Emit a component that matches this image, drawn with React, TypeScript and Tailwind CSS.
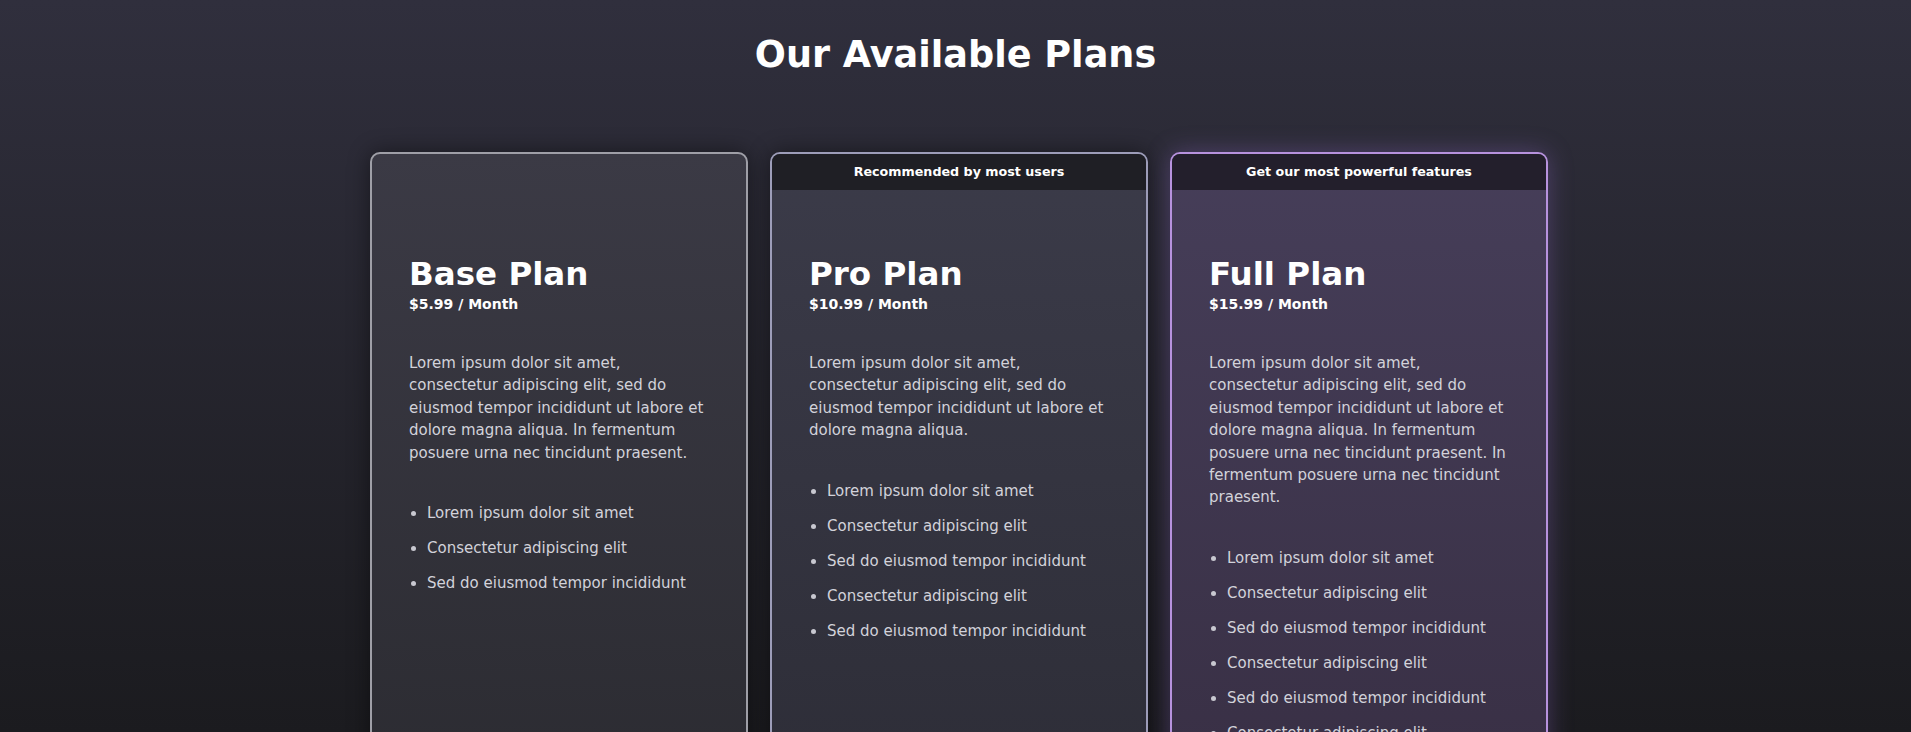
const lorem =
    "Lorem ipsum dolor sit amet, consectetur adipiscing elit, sed do eiusmod tempor incididunt ut labore et dolore magna aliqua."

type Plan = {
    name: string
    price: string
    banner?: string
    text: string
    features: string[]
    variant: "base" | "pro" | "full"
}

const plans: Plan[] = [
    {
        name: "Base Plan",
        price: "$5.99 / Month",
        text: lorem + " In fermentum posuere urna nec tincidunt praesent.",
        features: ["Lorem ipsum dolor sit amet", "Consectetur adipiscing elit", "Sed do eiusmod tempor incididunt"],
        variant: "base",
    },
    {
        name: "Pro Plan",
        price: "$10.99 / Month",
        banner: "Recommended by most users",
        text: lorem,
        features: [
            "Lorem ipsum dolor sit amet",
            "Consectetur adipiscing elit",
            "Sed do eiusmod tempor incididunt",
            "Consectetur adipiscing elit",
            "Sed do eiusmod tempor incididunt",
        ],
        variant: "pro",
    },
    {
        name: "Full Plan",
        price: "$15.99 / Month",
        banner: "Get our most powerful features",
        text: lorem + " In fermentum posuere urna nec tincidunt praesent. In fermentum posuere urna nec tincidunt praesent.",
        features: [
            "Lorem ipsum dolor sit amet",
            "Consectetur adipiscing elit",
            "Sed do eiusmod tempor incididunt",
            "Consectetur adipiscing elit",
            "Sed do eiusmod tempor incididunt",
            "Consectetur adipiscing elit",
        ],
        variant: "full",
    },
]

const cardStyles = {
    base: "border-[#9f9fa7] bg-gradient-to-b from-[#3b3a45] to-[#2b2b31] shadow-[0_0_22px_rgba(0,0,0,0.45)]",
    pro: "border-[#9d9db9] bg-gradient-to-b from-[#3b3b49] to-[#2d2d37] shadow-[0_0_22px_rgba(0,0,0,0.45)]",
    full: "border-[#b792de] bg-gradient-to-b from-[#463e59] to-[#382f44] shadow-[0_0_24px_rgba(150,110,210,0.35)]",
}

const bannerStyles = {
    base: "",
    pro: "bg-[#1f1f25]",
    full: "bg-[#231f2c]",
}

function PlanCard({ plan }: { plan: Plan }) {
    return (
        <div className={`w-[378px] shrink-0 rounded-[10px] border-2 overflow-hidden flex flex-col ${cardStyles[plan.variant]}`}>
            <div className={`h-[36px] flex items-center justify-center text-[12.7px] font-bold text-white ${bannerStyles[plan.variant]}`}>
                {plan.banner}
            </div>

            <div className="px-[37px] pt-[65px] pb-16">
                <h2 className="text-[32.5px] leading-[1.2] font-bold text-white">{plan.name}</h2>
                <p className="text-[14px] leading-[20px] font-bold text-white">{plan.price}</p>

                <p className="mt-[38px] text-[15px] leading-[22.4px] text-[#d2d2da]">{plan.text}</p>

                <ul className="mt-[38px] pl-[18px] list-disc flex flex-col gap-[12.6px] text-[15px] leading-[22.4px] text-[#d2d2da] marker:text-[#c8c8d0]">
                    {plan.features.map((f, i) => (
                        <li key={i}>{f}</li>
                    ))}
                </ul>
            </div>
        </div>
    )
}

export default function App() {
    return (
        <div className="h-screen overflow-hidden bg-gradient-to-b from-[#302f3d] to-[#1b1b1f] font-['DejaVu_Sans',sans-serif]">
            <h1 className="pt-[33px] text-center text-[36.6px] leading-[1.2] font-bold text-white">
                Our Available Plans
            </h1>

            <main className="mt-[75px] pl-[7px] flex justify-center items-stretch gap-[22px]">
                {plans.map((p) => (
                    <PlanCard key={p.name} plan={p} />
                ))}
            </main>
        </div>
    )
}
